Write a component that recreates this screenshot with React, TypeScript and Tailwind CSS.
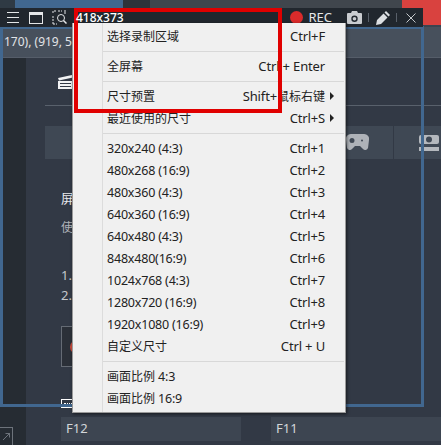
const MENU: (null | { label: string; key?: string; arrow?: boolean })[] = [
  { label: "选择录制区域", key: "Ctrl+F" },
  null,
  { label: "全屏幕", key: "Ctrl + Enter" },
  null,
  { label: "尺寸预置", key: "Shift+鼠标右键", arrow: true },
  { label: "最近使用的尺寸", key: "Ctrl+S", arrow: true },
  null,
  { label: "320x240 (4:3)", key: "Ctrl+1" },
  { label: "480x268 (16:9)", key: "Ctrl+2" },
  { label: "480x360 (4:3)", key: "Ctrl+3" },
  { label: "640x360 (16:9)", key: "Ctrl+4" },
  { label: "640x480 (4:3)", key: "Ctrl+5" },
  { label: "848x480(16:9)", key: "Ctrl+6" },
  { label: "1024x768 (4:3)", key: "Ctrl+7" },
  { label: "1280x720 (16:9)", key: "Ctrl+8" },
  { label: "1920x1080 (16:9)", key: "Ctrl+9" },
  { label: "自定义尺寸", key: "Ctrl + U" },
  null,
  { label: "画面比例 4:3" },
  { label: "画面比例 16:9" },
];

// chinese runs sit a px smaller than the latin ones in the original menu
function MenuText({ text, className }: { text: string; className: string }) {
  return (
    <span className={className}>
      {text.split(/([\u4e00-\u9fff]+)/).map((part, i) =>
        /[\u4e00-\u9fff]/.test(part) ? (
          <span key={i} className="text-[12px] tracking-normal">{part}</span>
        ) : (
          <span key={i}>{part}</span>
        )
      )}
    </span>
  );
}

function Toolbar() {
  return (
    <div className="absolute left-0 top-[8px] flex h-[19px] w-[423px] items-center bg-[#21272e] text-[#e4e6e8]">
      <svg width="12" height="11" viewBox="0 0 12 11" className="ml-[7px]" stroke="currentColor" fill="none">
        <path d="M0 .5h12M0 5.5h12M0 10.5h12" />
      </svg>
      <svg width="14" height="12" viewBox="0 0 14 12" className="ml-[10px]" stroke="currentColor" fill="none">
        <rect x=".5" y=".5" width="13" height="11" />
        <path d="M0 2h14" strokeWidth="2" />
      </svg>
      <svg width="15" height="15" viewBox="0 0 15 15" className="ml-[9px]" stroke="currentColor" fill="none">
        <path d="M1 14h4M1 14V5M1 3V1h3M6 1h4" strokeDasharray="2 1" />
        <path d="M13 0v4" />
        <circle cx="9" cy="8" r="3.5" />
        <path d="M11.5 10.5l3 3" strokeWidth="1.5" />
      </svg>
      <span className="relative z-10 ml-[9px] text-[12px] font-medium leading-none text-white">418x373</span>
      <div className="ml-auto flex items-center">
        <span className="h-[13px] w-[13px] rounded-full bg-[#d92b2b]" />
        <span className="ml-[5px] text-[13px] leading-none text-[#e6e8ea]">REC</span>
        <svg width="15" height="13" viewBox="0 0 15 13" className="ml-[15px]" fill="#c9ccd0">
          <path fillRule="evenodd" d="M1 2h3l1-2h5l1 2h3a1 1 0 0 1 1 1v9a1 1 0 0 1-1 1H1a1 1 0 0 1-1-1V3a1 1 0 0 1 1-1zm6.5 2.5a3.2 3.2 0 1 0 0 6.4 3.2 3.2 0 0 0 0-6.4z" />
          <circle cx="7.5" cy="7.7" r="1.8" />
        </svg>
        <span className="ml-[6px] h-[9px] w-px bg-[#59606a]" />
        <svg width="14" height="14" viewBox="0 0 14 14" className="ml-[7px]" fill="#dcdfe2">
          <path d="M10 0l4 4-1.5 1.5-4-4zM7.5 2.5l4 4L5 13 0 14l1-5z" />
        </svg>
        <span className="ml-[6px] h-[9px] w-px bg-[#59606a]" />
        <svg width="10" height="10" viewBox="0 0 10 10" className="ml-[9px] mr-[7px]" stroke="#c4c8cc" fill="none">
          <path d="M.5.5l9 9M9.5.5l-9 9" />
        </svg>
      </div>
    </div>
  );
}

function Menu() {
  return (
    <div className="absolute left-[72px] top-[23px] w-[274px] border-r border-b border-l border-[#9a9a9a] bg-[#f0f0f0] pb-[3px] pt-[2px] shadow-[1px_1px_3px_rgba(0,0,0,0.55)]">
      <div className="absolute bottom-0 left-[29px] top-0 w-px bg-[#dcdcdc]" />
      {MENU.map((item, i) =>
        item === null ? (
          <div key={i} className="flex h-[8px] items-center pl-[30px] pr-[1px]">
            <div className="h-px w-full bg-[#d8d8d8]" />
          </div>
        ) : (
          <div key={i} className="relative flex h-[22px] items-center justify-between pl-[34px] pr-[20px] leading-[20px] text-[#222]">
            <MenuText text={item.label} className="pt-[2px] text-[12.5px] tracking-[-0.2px]" />
            {item.key && <MenuText text={item.key} className="text-[13px] tracking-[-0.15px]" />}
            {item.arrow && (
              <span className="absolute right-[11px] top-[7px] h-0 w-0 border-y-[4px] border-l-[4px] border-y-transparent border-l-[#222]" />
            )}
          </div>
        )
      )}
    </div>
  );
}

export default function App() {
  return (
    <div
      className="relative flex h-[445px] w-[441px] flex-col overflow-hidden bg-[#323945] text-[#d5d8dc]"
      style={{ fontFamily: '"Noto Sans", "Noto Sans CJK SC", sans-serif' }}
    >
      {/* blurred window behind the recorder */}
      <div className="flex h-[27px] shrink-0 bg-[#3a4450]">
        <div className="h-full w-[15px] bg-[#2f3a44]" />
        <div className="h-full w-[108px] bg-[#41678f]" />
        <div className="h-full w-[27px] bg-[#2d333a]" />
        <div className="h-full w-[252px] bg-[#40464d]" />
        <div className="h-[25px] flex-1 rounded-bl-[12px] bg-[#d9423f]" />
      </div>
      <div className="flex h-[31px] shrink-0 items-center border-b border-[#555d69] bg-[#47505c] pl-[4px] text-[12px] text-[#e2e4e7]">
        170), (919, 5
      </div>

      <div className="flex min-h-0 flex-1">
        <div className="relative w-[26px] shrink-0 bg-[#262c33]">
          <div className="absolute bottom-0 left-0 flex h-[18px] w-[13px] items-center justify-center border-r border-t border-[#6d737b]">
            <svg width="7" height="7" viewBox="0 0 7 7" stroke="#6d737b" fill="none">
              <path d="M0 7l7-7M2.5 .5H6.5V4.5" />
            </svg>
          </div>
        </div>
        <div className="flex min-w-0 flex-1 flex-col pl-[19px]">
          <div className="flex h-[48px] shrink-0 items-center border-b border-[#59616c] pl-[13px]">
            <svg width="15" height="14" viewBox="0 0 15 14" fill="#f2f3f4">
              <path d="M0 3l14-3 1 2.5-14 3zM0 6h15v8H0z" />
              <path d="M2 8.5h11M2 11.5h11" stroke="#323945" />
            </svg>
          </div>
          <div className="mt-[20px] flex h-[33px] shrink-0 items-center bg-[#3f4854]">
            <div className="flex h-full w-[349px] shrink-0 items-center justify-end border-r border-[#323945] pr-[24px]">
              <svg width="23" height="17" viewBox="0 0 23 17" fill="#aeb2b8">
                <path fillRule="evenodd" d="M5 0h13a5 5 0 0 1 5 6l-1 8a3 3 0 0 1-5 1l-3-3H9l-3 3a3 3 0 0 1-5-1L0 6a5 5 0 0 1 5-6zm1 4a2.5 2.5 0 1 0 0 5 2.5 2.5 0 0 0 0-5z" />
                <circle cx="16" cy="6.5" r="1" fill="#3f4854" />
              </svg>
            </div>
            <svg width="20" height="16" viewBox="0 0 20 16" fill="#b4b8bd" className="ml-[25px] shrink-0">
              <rect x="0" y="0" width="20" height="9" rx="2" />
              <circle cx="10" cy="4.5" r="3" fill="#3f4854" />
              <rect x="0" y="12" width="20" height="4" />
            </svg>
          </div>
          <div className="relative flex-1">
            <p className="pl-[16px] pt-[30px] text-[13px] leading-[18px] text-[#e8e9eb]">屏幕录制</p>
            <p className="pl-[16px] pt-[12px] text-[12px] leading-[18px] text-[#aeb2b8]">使用</p>
            <p className="pl-[16px] pt-[28px] text-[13px] leading-[20px] text-[#c4c7cb]">1.</p>
            <p className="pl-[16px] text-[13px] leading-[20px] text-[#c4c7cb]">2.</p>
            <div className="ml-[16px] mt-[21px] flex h-[41px] w-[40px] items-center border border-[#656b74] bg-[#2b3038] pl-[8px]">
              <span className="h-[14px] w-[14px] rounded-full bg-[#cc4a3c]" />
            </div>
            <div className="ml-[16px] mt-[32px] flex h-[9px] w-[40px] items-center border border-white bg-[#323945] pl-[2px]">
              <div className="h-0 w-[8px] border-t border-dotted border-white" />
            </div>
            <div className="absolute bottom-[4px] left-[16px] flex w-[380px] gap-[30px] text-[13px] text-[#d3d6d9]">
              <div className="flex h-[24px] w-[180px] items-center bg-[#3d4551] pl-[5px]">F12</div>
              <div className="flex h-[24px] flex-1 items-center bg-[#3d4551] pl-[5px]">F11</div>
            </div>
          </div>
        </div>
      </div>

      {/* capture frame */}
      <div className="pointer-events-none absolute left-0 top-[26px] h-[381px] w-[424px] border-[3px] border-[#41678f]" />
      <Toolbar />
      <Menu />
      <div className="pointer-events-none absolute left-[74px] top-[8px] h-[105px] w-[208px] border-4 border-[#e00000]" />
    </div>
  );
}
